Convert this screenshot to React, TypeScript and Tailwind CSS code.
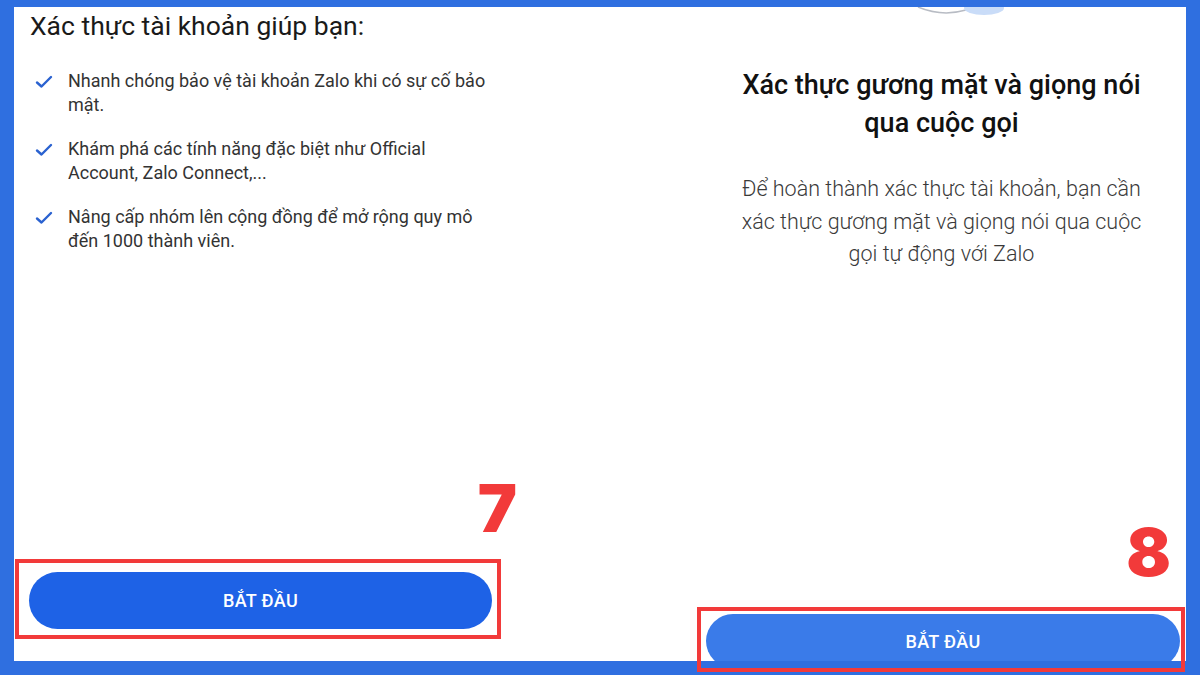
import React from "react";

const items = [
  ["Nhanh chóng bảo vệ tài khoản Zalo khi có sự cố bảo", "mật."],
  ["Khám phá các tính năng đặc biệt như Official", "Account, Zalo Connect,..."],
  ["Nâng cấp nhóm lên cộng đồng để mở rộng quy mô", "đến 1000 thành viên."],
];

function Check() {
  return (
    <svg width="18" height="14" viewBox="0 0 18 14" className="shrink-0">
      <path d="M2 7.5 L6.5 11.5 L16 2" fill="none" stroke="#2a62d0" strokeWidth="2.4" strokeLinecap="round" strokeLinejoin="round" />
    </svg>
  );
}

export default function App() {
  return (
    <div
      className="w-[1200px] h-[675px] bg-[#2f6fe0] pt-[7px] pl-[14px] pr-[14px] pb-[14px] overflow-hidden"
      style={{ fontFamily: "Roboto, 'Noto Sans', sans-serif" }}
    >
      <div className="relative w-full h-full bg-white flex">
        {/* partial illustration at the top */}
        <svg className="absolute left-[900px] top-0" width="100" height="12" viewBox="0 0 100 12">
          <path d="M4 0 Q28 10 52 3" fill="none" stroke="#b8bcc4" strokeWidth="1.5" />
          <ellipse cx="70" cy="1" rx="20" ry="7" fill="#c9dcf8" />
        </svg>

        {/* left column */}
        <div className="w-[683px] flex flex-col">
          <h1 className="pl-4 pt-[2px] text-[26.5px] leading-[34px] text-[#1a1a1a] font-normal">
            Xác thực tài khoản giúp bạn:
          </h1>
          <ul className="mt-[26px] flex flex-col gap-5 pl-[21px]">
            {items.map((it, i) => (
              <li key={i} className="flex items-start gap-[15px]">
                <div className="h-6 flex items-center pt-[2px]">
                  <Check />
                </div>
                <div className="text-[18px] leading-6 text-[#333]">
                  <div>{it[0]}</div>
                  <div>{it[1]}</div>
                </div>
              </li>
            ))}
          </ul>
          <div className="mt-auto mb-[22px] ml-[1px] relative w-[486px] h-[80px] border-4 border-[#f23a3a] pt-[9px] pl-[10px] pr-[5px]">
            <span className="absolute -top-[88px] -right-[20px] text-[66px] leading-none font-black text-[#f23a3a]" style={{ fontFamily: "Inter, sans-serif" }}>
              7
            </span>
            <button className="w-full h-[57px] rounded-full bg-[#1e62e6] text-white text-[18px] font-medium tracking-[0.02em]">
              BẮT ĐẦU
            </button>
          </div>
        </div>

        {/* right column */}
        <div className="flex-1 flex flex-col items-center">
          <h2 className="mt-[59px] text-[27px] leading-[38px] font-medium text-[#111] text-center">
            Xác thực gương mặt và giọng nói
            <br />
            qua cuộc gọi
          </h2>
          <p className="mt-[31px] text-[21.5px] leading-[32.5px] font-light text-[#3a3a3a] text-center whitespace-nowrap">
            Để hoàn thành xác thực tài khoản, bạn cần
            <br />
            xác thực gương mặt và giọng nói qua cuộc
            <br />
            gọi tự động với Zalo
          </p>
          <div className="mt-auto -mb-[11px] self-start relative w-[488px] h-[65px] border-4 border-[#f23a3a] pt-[3px] pl-[5px] pr-[1px]">
            <span className="absolute -top-[92px] right-[10px] text-[66px] leading-none font-black text-[#f23a3a]" style={{ fontFamily: "Inter, sans-serif" }}>
              8
            </span>
            <div className="h-[47px] overflow-hidden">
              <button className="w-full h-[54px] rounded-full bg-[#3a7be9] text-white text-[18px] font-medium tracking-[0.02em]">
                BẮT ĐẦU
              </button>
            </div>
          </div>
        </div>
      </div>
    </div>
  );
}
